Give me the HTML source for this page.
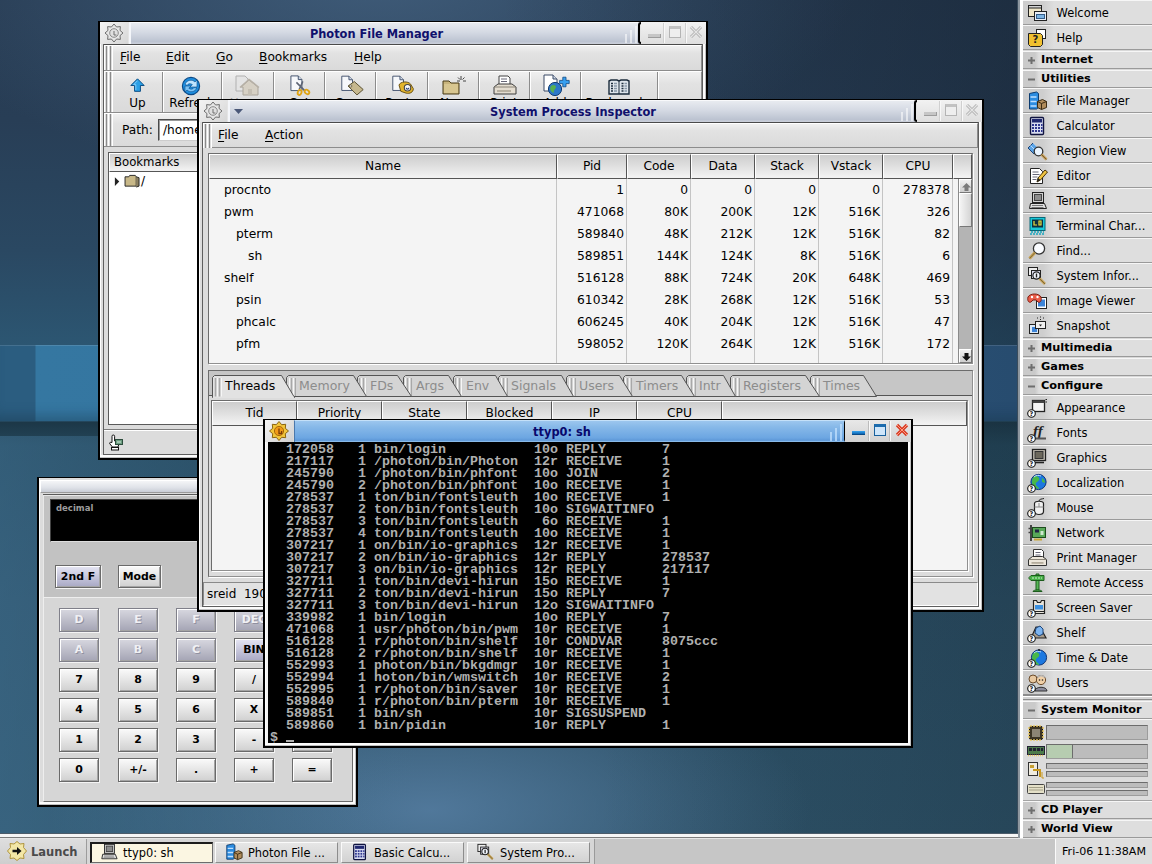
<!DOCTYPE html>
<html lang="en">
<head>
<meta charset="utf-8">
<title>Photon microGUI desktop</title>
<style>
*{box-sizing:border-box;margin:0;padding:0}
html,body{width:1152px;height:864px;overflow:hidden;background:#2a4257}
body{font-family:"DejaVu Sans","Liberation Sans",sans-serif;font-size:12.2px;color:#000;position:relative}
.abs,.win,.win *{position:absolute}
.win u,.win b.k{position:static}
u{text-decoration:underline;text-underline-offset:2px;text-decoration-thickness:1px}
/* ---------- desktop background ---------- */
#desk{position:absolute;left:0;top:0;width:1152px;height:864px;overflow:hidden;
 background:
  radial-gradient(ellipse 480px 220px at 380px -30px,rgba(72,104,136,.75),rgba(72,104,136,0) 100%),
  radial-gradient(ellipse 380px 150px at 430px 810px,rgba(84,124,160,.9),rgba(84,124,160,0) 100%),
  linear-gradient(180deg,#273b52 0,#283e56 120px,#2a4862 250px,#2c5672 345px,#2c5672 421px,#1c3747 422px,#24465a 445px,#2b4d63 600px,#2e5268 838px);}
#dk1{position:absolute;left:0;top:0;width:1152px;height:345px;background:linear-gradient(90deg,rgba(18,30,44,0) 0,rgba(18,30,44,0) 500px,rgba(18,30,44,.45) 1018px)}
#dk2{position:absolute;left:0;top:421px;width:1152px;height:417px;background:linear-gradient(90deg,rgba(20,40,52,0) 0,rgba(20,40,52,0) 600px,rgba(20,40,52,.28) 1018px)}
#band{position:absolute;left:0;top:345px;width:1152px;height:76px;background:linear-gradient(90deg,#2b5d80 0,#2b5d80 35px,#3577a1 36px,#3474a0 400px,#294f73 900px,#25486a 1152px);box-shadow:inset 0 1px 0 rgba(255,255,255,.12),inset 0 -14px 12px -8px rgba(20,50,70,.35)}
#band2{display:none}
#lt{position:absolute;left:0;top:436px;width:420px;height:402px;background:linear-gradient(90deg,rgba(66,116,150,.5),rgba(66,116,150,0))}
/* ---------- generic window ---------- */
.win{background:#dcdcdc;border:2px solid #000;border-top-width:1px;box-shadow:inset -1px -1px 0 #c0c0c0,inset -3px -3px 0 #fcfcfc,inset 1px 0 0 #fcfcfc}
.inner{left:3px;top:22px;right:3px;bottom:3px;border:1px solid #5e5e5e;border-top:0}
.tb{left:0;top:0;right:0;height:22px;background:#e4e4e4}
.tb .ico{left:0;top:0;width:28px;height:22px;background:linear-gradient(135deg,#f4f4f4,#d6d6d6)}
.tb .grad{left:29px;top:0;height:22px;border-left:2px solid #f4f6fa;border-top:1px solid #f8f9fb;
  background:linear-gradient(180deg,#e8ebf0 0,#d4d9e3 45%,#bcc3d1 88%,#ccd1db 100%)}
.tb .ttl{left:0;right:0;top:5px;text-align:center;font-weight:bold;font-size:11.4px;color:#10106c;white-space:nowrap}
.tb .cap{top:0;width:3px;height:22px;border:2px solid #000;border-right:0;border-radius:3px 0 0 3px}
.tb .btns{top:0;right:0;width:65px;height:22px;background:linear-gradient(180deg,#f2f2f2,#dedede)}
.tb .sep{top:1px;width:1px;height:20px;background:#d0d0d0;box-shadow:1px 0 0 #f8f8f8}
.bars{left:0;top:0;width:100%;height:21px}
.bars i{bottom:0;width:2px;background:rgba(255,255,255,.55)}
.hline{height:1px;background:#4a4a4a}
.grip{width:9px;background:repeating-linear-gradient(90deg,#fff 0,#fff 1px,#dcdcdc 1px,#dcdcdc 2px,#8a8a8a 2px,#8a8a8a 3px,#dcdcdc 3px,#dcdcdc 4px)}
.mbar{background:linear-gradient(180deg,#f0f0f0 0,#e2e2e2 30%,#dadada 100%);border-top:1px solid #fff;border-bottom:1px solid #8c8c8c;border-right:1px solid #8c8c8c}
.mbar span{top:4px;white-space:nowrap}
.hdr{background:linear-gradient(180deg,#cdcdcd 0,#e0e0e0 50%,#f2f2f2 95%);border:1px solid #555;border-top-color:#fff;border-left-color:#fff;text-align:center;white-space:nowrap}
.tsep{top:0;width:1px;height:40px;background:#8c8c8c;box-shadow:1px 0 0 #fff}
.mbar .tl{top:24px;font-size:12px;text-align:center;white-space:nowrap}
.mbar .tl.dis{color:#999}
.cb{width:40px;height:24px;border:1px solid #6a6a6a;box-shadow:inset 1px 1px 0 #fff,inset -1px -1px 0 #a4a4a4,1px 1px 0 #f4f4f4;background:linear-gradient(180deg,#fafafa,#d0d0d0);text-align:center;font-weight:bold;font-size:10.9px;line-height:22px;white-space:nowrap}
.cb.lav{background:linear-gradient(180deg,#e6e6f4,#a8a8c4)}
.cb.lav.dim{background:linear-gradient(180deg,#d8d8e0,#a4a4b4)}
.cb.dim{color:#f0f0f4;text-shadow:1px 1px 0 #9090a0;border-color:#80808a}
.cl{top:25px;width:1px;height:184px;background:#c4c4c4}
.pr{left:0;width:744px;height:22px}
.pr span{top:1px;white-space:nowrap;font-size:12.3px;line-height:16px}
.pr .r{text-align:right}
.sbb{width:13px;height:14px;background:linear-gradient(180deg,#f0f0f0,#cfcfcf);border:1px solid #fff;border-right-color:#777;border-bottom-color:#777}
#tty{left:3px;top:22px;width:640px;height:301px;background:#000;color:#b0b0b0;font-family:"Liberation Mono","DejaVu Sans Mono",monospace;font-weight:bold;font-size:13.33px;line-height:12px;padding:2px 0 0 2px;overflow:hidden;white-space:pre}
#tty .cur{position:static;display:inline-block;width:8px;height:2px;background:#b0b0b0;vertical-align:-1px}
/*SHELFCSS*/
#shelf{position:absolute;left:1020px;top:0;width:132px;height:838px;background:#d8d8d8;border-left:3px solid #fff;box-shadow:-2px 0 0 #8e979f,-3px 0 0 #3a4c5c}
#shelf>div{position:absolute}
.si{left:0;width:129px;height:25px;border-top:1px solid #f6f6f6;border-bottom:1px solid #9a9a9a;background:linear-gradient(90deg,#cdcdcd 0,#cecece 20px,#dedede 31px,#dedede 100%)}
.si svg{position:absolute;left:4px;top:2px}
.si span{position:absolute;left:33.5px;top:4.5px;font-size:11.45px;white-space:nowrap}
.sg{left:0;width:129px;height:18px;border-top:1px solid #f6f6f6;border-bottom:1px solid #9a9a9a;background:linear-gradient(90deg,#cacaca 0,#cacaca 12px,#dedede 16px,#dedede 100%)}
.sg .pm{position:absolute;left:5px;top:5px}
.sg span{position:absolute;left:18px;top:1px;font-weight:bold;font-size:11.3px;white-space:nowrap}
.bar{position:absolute;background:#bcbcbc;border:1px solid #6c6c6c;border-bottom-color:#9c9c9c;border-right-color:#9c9c9c}
/*SHELFCSSEND*/
/*TASKCSS*/
#deskedge{position:absolute;left:0;top:833px;width:1018px;height:5px;background:#f6f6f6;border-top:1px solid #4c5c6a;border-bottom:1px solid #7c7c7c}
#taskbar{position:absolute;left:0;top:838px;width:1152px;height:26px;background:#d6d6d6;border-top:1px solid #e6e6e6}
#taskbar>div{position:absolute}
.launch{left:0;top:0;width:87px;height:25px;background:linear-gradient(180deg,#dedede,#cecece);border-right:1px solid #9c9c9c}
.launch svg{position:absolute;left:6px;top:1px}
.launch span{position:absolute;left:31px;top:6px;font-weight:bold;font-size:11.5px;color:#4a4a4a}
.tk{top:3px;width:123px;height:21px;background:linear-gradient(180deg,#e6e6e6,#d2d2d2);border:1px solid #fafafa;border-right-color:#8c8c8c;border-bottom-color:#8c8c8c}
.tk svg{position:absolute;left:8px;top:0}
.tk span{position:absolute;left:32px;top:3px;font-size:11.4px;white-space:nowrap}
.tk.act{background:#fbf6e2;border:1px solid #1c1c1c;border-width:2px 1px 1px 2px;border-right-color:#6c6c6c;border-bottom-color:#6c6c6c}
.tk.act svg{left:7px;top:-1px}.tk.act span{left:31px;top:2px}
.rest{left:594px;top:0;width:461px;height:25px;background:#c6c6c6;border-left:1px solid #9a9a9a}
.clock{left:1055px;top:0;width:97px;height:25px;background:#dedede;border-left:1px solid #fafafa;font-size:11.1px;padding:6px 0 0 6px;white-space:nowrap}
/*TASKCSSEND*/
</style>
</head>
<body>
<div id="desk">
<div id="lt"></div><div id="dk1"></div><div id="dk2"></div><div id="band"></div>
<!-- ================= Photon File Manager ================= -->
<div class="win" id="fm" style="left:98px;top:21px;width:610px;height:439px">
 <div class="tb">
  <div class="ico"><svg class="abs" style="left:4px;top:1px" width="20" height="20" viewBox="0 0 20 20"><polygon points="10,1 12.6,4 16.4,3.6 16,7.4 19,10 16,12.6 16.4,16.4 12.6,16 10,19 7.4,16 3.6,16.4 4,12.6 1,10 4,7.4 3.6,3.6 7.4,4" fill="#e6e6e6" stroke="#6e6e6e" stroke-width="1"/><circle cx="10" cy="10" r="4.3" fill="#e0e0e0" stroke="#8a8a8a"/><path d="M10 8v4h2.4" stroke="#6e6e6e" fill="none"/></svg></div>
  <div class="grad" style="width:511px"></div>
  <div class="ttl" style="left:0;width:553px">Photon File Manager</div>
  <div class="bars"><i style="left:525px;height:9px"></i><i style="left:530px;height:13px"></i><i style="left:535px;height:17px"></i></div>
  <div class="cap" style="left:538px"></div>
  <div class="btns">
   <i class="abs" style="left:7px;top:12px;width:13px;height:4px;background:#c6c6c6;border-bottom:1px solid #9c9c9c;border-right:1px solid #9c9c9c"></i>
   <i class="sep" style="left:22px"></i>
   <i class="abs" style="left:28px;top:4px;width:12px;height:12px;border:1px solid #b4b4b4;border-top:3px solid #c2c2c2;background:#eee"></i>
   <i class="sep" style="left:44px"></i>
   <svg class="abs" style="left:48px;top:3px" width="14" height="14" viewBox="0 0 14 14"><path d="M2 2l10 10M12 2L2 12" stroke="#b0b0b0" stroke-width="3"/><path d="M2 2l10 10M12 2L2 12" stroke="#e6e6e6" stroke-width="1.2"/></svg>
  </div>
 </div>
 <div class="inner"></div>
 <div class="hline" style="left:4px;top:22px;right:4px"></div>
 <!-- menubar -->
 <div class="mbar" style="left:4px;top:23px;right:4px;height:26px">
  <div class="grip" style="left:0;top:0;height:24px"></div>
  <span style="left:16px"><u>F</u>ile</span><span style="left:62px"><u>E</u>dit</span><span style="left:112px"><u>G</u>o</span><span style="left:155px"><u>B</u>ookmarks</span><span style="left:250px"><u>H</u>elp</span>
 </div>
 <!-- toolbar -->
 <div class="mbar" id="fmtool" style="left:4px;top:49px;right:4px;height:42px">
  <div class="grip" style="left:0;top:0;height:40px"></div>
  <b class="tsep" style="left:58px"></b><b class="tsep" style="left:117px"></b><b class="tsep" style="left:169px"></b><b class="tsep" style="left:220px"></b><b class="tsep" style="left:271px"></b><b class="tsep" style="left:323px"></b><b class="tsep" style="left:374px"></b><b class="tsep" style="left:425px"></b><b class="tsep" style="left:476px"></b><b class="tsep" style="left:553px"></b>
  <span class="tl" style="left:9px;width:49px">Up</span><span class="tl" style="left:59px;width:58px">Refresh</span><span class="tl dis" style="left:118px;width:51px">Home</span><span class="tl" style="left:170px;width:50px">Cut</span><span class="tl" style="left:221px;width:50px">Copy</span><span class="tl" style="left:272px;width:51px">Paste</span><span class="tl" style="left:324px;width:50px">New</span><span class="tl" style="left:375px;width:50px">Print</span><span class="tl" style="left:426px;width:50px">Add</span><span class="tl" style="left:477px;width:76px">Bookmarks</span>
  <!-- Up -->
  <svg class="abs" style="left:25px;top:6px" width="17" height="15" viewBox="0 0 20 18"><path d="M10 1L18 9H13.5V16H6.5V9H2Z" fill="#2aa0e6" stroke="#0d4f86" stroke-width="1.2" stroke-linejoin="round"/><path d="M10 3.2L5.4 8H8v6.5" stroke="#8fd4ff" fill="none"/></svg>
  <!-- Refresh -->
  <svg class="abs" style="left:75px;top:3px" width="24" height="22" viewBox="0 0 24 22"><circle cx="12" cy="11" r="8.6" fill="#1e8fe0" stroke="#0c4a86" stroke-width="1.2"/><path d="M6 9c2-4 7-5 10-2l2-2v7h-7l2.4-2.4c-2-1.600-4.400-1-5.400.8z" fill="#bfe4ff" stroke="#0c4a86" stroke-width=".6"/><path d="M18 13c-2 4-7 5-10 2l-2 2v-6h6l-2.200 2.200c2 1.600 4.200 1 5.200-.6z" fill="#7cc4f6" stroke="#0c4a86" stroke-width=".6"/></svg>
  <!-- Home (disabled) -->
  <svg class="abs" style="left:130px;top:3px" width="26" height="22" viewBox="0 0 26 22"><path d="M2 1h9l3 3v12H2z" fill="#e4e4e4" stroke="#b0b0b0"/><path d="M7 12l8-7 9 7v8H9v-8z" fill="#d6d0c4" stroke="#aaa49a"/><path d="M6 12.500l9-8 10 8" fill="none" stroke="#b6b0a6" stroke-width="1.600"/><rect x="14" y="14" width="4" height="6" fill="#c4beb2"/></svg>
  <!-- Cut -->
  <svg class="abs" style="left:185px;top:3px" width="24" height="22" viewBox="0 0 26 24"><path d="M2 1h8l4 4v12H2z" fill="#f6f8fb" stroke="#3a4a66"/><path d="M10 1v4h4" fill="#cfd8e6" stroke="#3a4a66"/><path d="M8 8l9 9M15 7l-4 9" stroke="#5c6474" stroke-width="1.700"/><ellipse cx="19.500" cy="18.500" rx="2.800" ry="2" transform="rotate(40 19.500 18.500)" fill="none" stroke="#e0a414" stroke-width="2"/><ellipse cx="11.500" cy="19" rx="2" ry="2.800" transform="rotate(20 11.500 19)" fill="none" stroke="#e0a414" stroke-width="2"/></svg>
  <!-- Copy -->
  <svg class="abs" style="left:236px;top:3px" width="25" height="22" viewBox="0 0 28 24"><path d="M2 1h8l4 4v12H2z" fill="#f6f8fb" stroke="#3a4a66"/><path d="M10 1v4h4" fill="#cfd8e6" stroke="#3a4a66"/><path d="M9 12l7-5 10 9-7 6z" fill="#c6b88e" stroke="#4e4424"/><circle cx="12" cy="12" r="1.300" fill="#fff" stroke="#4e4424" stroke-width=".8"/></svg>
  <!-- Paste -->
  <svg class="abs" style="left:287px;top:3px" width="25" height="22" viewBox="0 0 28 24"><path d="M2 1h8l4 4v12H2z" fill="#f6f8fb" stroke="#3a4a66"/><path d="M10 1v4h4" fill="#cfd8e6" stroke="#3a4a66"/><path d="M9 11c1-4 10-5 13-1l3 5c0 4-4 6-8 5l-6-2z" fill="#e2b42c" stroke="#5e4608"/><circle cx="18.500" cy="14" r="3.600" fill="#fafafa" stroke="#444" stroke-width="1.200"/><path d="M17 14a1.500 1.500 0 1 0 3 0" stroke="#28407a" fill="none" stroke-width="1.200"/></svg>
  <!-- New folder -->
  <svg class="abs" style="left:337px;top:3px" width="26" height="22" viewBox="0 0 26 22"><path d="M2 6h6l2 2h8v11H2z" fill="#c8b47c" stroke="#4a3c18"/><path d="M3 9h14v9H3z" fill="#d8c690"/><path d="M20 1v4M17 2.500l2 2M23.500 2.500l-2 2M16 6h3M22 6h3" stroke="#444" stroke-width="1"/></svg>
  <!-- Print -->
  <svg class="abs" style="left:388px;top:3px" width="26" height="22" viewBox="0 0 26 22"><path d="M7 1h9l2 2v8H7z" fill="#fff" stroke="#444"/><path d="M9 4h6M9 6.500h6" stroke="#667" stroke-width="1"/><path d="M2 12l4-3h14l4 3v7H2z" fill="#e4ddd0" stroke="#3c3c3c"/><path d="M2 12h22" stroke="#8a8478"/><rect x="5" y="15" width="14" height="2" fill="#b8b0a0"/></svg>
  <!-- Add bookmark -->
  <svg class="abs" style="left:438px;top:2px" width="28" height="24" viewBox="0 0 28 24"><path d="M2 1h9l4 4v12H2z" fill="#fff" stroke="#3a4a66"/><path d="M11 1v4h4" fill="#cfd8e6" stroke="#3a4a66"/><circle cx="13" cy="15" r="6.600" fill="#2c78c8" stroke="#103a70"/><path d="M9 12c2-2 5-1 5 1s-3 3-2 6c-3-1-5-4-3-7z" fill="#58b050"/><path d="M20 3h4v4h4v4h-4v4h-4v-4h-4V7h4z" transform="scale(.8) translate(6,1)" fill="#38a0f0" stroke="#0c4a86"/></svg>
  <!-- Bookmarks book -->
  <svg class="abs" style="left:504px;top:6px" width="22" height="18" viewBox="0 0 22 18"><path d="M1 3l2-1h6l2 1 2-1h6l2 1v13H1z" fill="#dfe6ec" stroke="#1c2c3c" stroke-width="1.400"/><path d="M11 3v13" stroke="#1c2c3c"/><path d="M3 5.500h2M3 8h2M3 10.500h2M3 13h2M13.500 5.500h2M13.500 8h2M13.500 10.500h2M13.500 13h2" stroke="#203040" stroke-width="1.300"/><path d="M6 5.500h3M6 8h3M6 10.500h3M6 13h3M16.500 5.500h2.500M16.500 8h2.500M16.500 10.500h2.500M16.500 13h2.500" stroke="#8898a8" stroke-width="1.300"/></svg>
 </div>
 <!-- path row -->
 <div class="mbar" style="left:4px;top:91px;right:4px;height:34px">
  <div class="grip" style="left:0;top:0;height:32px"></div>
  <span style="left:18px;top:9px">Path:</span>
  <div style="left:54px;top:5px;width:520px;height:22px;background:#fff;border:1px solid #4a4a4a;border-right-color:#ccc;border-bottom-color:#ccc;box-shadow:inset 1px 1px 0 #9a9a9a"><span style="left:4px;top:3px">/home</span></div>
 </div>
 <!-- bookmarks pane -->
 <div style="left:8px;top:130px;width:221px;height:273px;background:#fff;border:1px solid #5a5a5a">
  <div class="hdr" style="left:0;top:0;width:219px;height:19px;text-align:left;padding:1px 0 0 4px;font-size:11.7px">Bookmarks</div>
  <svg style="left:5px;top:24px" width="7" height="9" viewBox="0 0 8 10"><path d="M1 0l5 5-5 5z" fill="#222"/></svg>
  <svg style="left:15px;top:21px" width="17" height="14" viewBox="0 0 18 15"><path d="M1 3h4l1-1.500h6l1 1.500v10H1z" fill="#c8b888" stroke="#222"/><path d="M13 3l3 1v9l-3 1" fill="#8c8060" stroke="#222"/></svg>
  <span style="left:32px;top:21px">/</span>
 </div>
 <!-- status -->
 <div style="left:4px;top:407px;right:4px;height:1px;background:#7c7c7c"></div>
 <div style="left:4px;top:408px;right:4px;height:1px;background:#fff"></div>
 <svg style="left:7px;top:411px" width="18" height="18" viewBox="0 0 18 18"><path d="M5 9.500V3.300a1.300 1.300 0 0 1 2.600 0V8l3.200.600q1.400.400 1.200 2L11 14H5.500L2.800 10.800q-.6-1.300.9-1.500z" fill="#fff" stroke="#111" stroke-width="1"/><rect x="4.500" y="14.500" width="7" height="2.500" fill="#fff" stroke="#111" stroke-width="1"/><rect x="8.500" y="6.500" width="7" height="5" fill="#6a9c7e" stroke="#2c4c3c"/><path d="M10 9h4" stroke="#d4e8dc"/></svg>
</div>
<!-- ================= Basic Calculator ================= -->
<div class="win" id="calc" style="left:37px;top:477px;width:321px;height:330px"><div style="left:0;top:1px;right:0;bottom:0">
 <div style="left:1px;top:1px;right:1px;height:13px;border:1px solid #fff;border-bottom-color:#9a9a9a;background:linear-gradient(180deg,#f4f5f7,#dfe2e8 60%,#c9cdd6)"></div>
 <div style="left:4px;top:15px;right:4px;height:1px;background:#5a5a5a"></div>
 <div style="left:4px;top:16px;right:3px;height:102px;background:#c2c2c2;border-top:1px solid #e8e8e8;border-left:1px solid #e8e8e8"></div>
 <div style="left:4px;top:118px;right:3px;height:205px;background:#d6d6d6;border-top:1px solid #eee;border-left:1px solid #eee;border-bottom:1px solid #6a6a6a;border-right:1px solid #6a6a6a"></div>
 <div style="left:11px;top:20px;width:295px;height:43px;background:#000;border:1px solid #444;border-bottom-color:#ddd;border-right-color:#ddd"><span style="left:5px;top:3px;font-size:8.5px;font-weight:bold;color:#9c9c9c">decimal</span></div>
 <div class="cb lav" style="left:16px;top:86px;width:46px;height:23px">2nd F</div>
 <div class="cb" style="left:79px;top:86px;width:43px;height:23px">Mode</div>
 <!-- row D E F DEC -->
 <div class="cb lav dim" style="left:20px;top:129px">D</div><div class="cb lav dim" style="left:79px;top:129px">E</div><div class="cb lav dim" style="left:137px;top:129px">F</div><div class="cb lav dim" style="left:195px;top:129px">DEC</div><div class="cb lav dim" style="left:253px;top:129px">OCT</div>
 <div class="cb lav dim" style="left:20px;top:159px">A</div><div class="cb lav dim" style="left:79px;top:159px">B</div><div class="cb lav dim" style="left:137px;top:159px">C</div><div class="cb lav" style="left:195px;top:159px">BIN</div><div class="cb lav" style="left:253px;top:159px">HEX</div>
 <div class="cb" style="left:20px;top:189px">7</div><div class="cb" style="left:79px;top:189px">8</div><div class="cb" style="left:137px;top:189px">9</div><div class="cb" style="left:195px;top:189px">/</div><div class="cb" style="left:253px;top:189px">%</div>
 <div class="cb" style="left:20px;top:219px">4</div><div class="cb" style="left:79px;top:219px">5</div><div class="cb" style="left:137px;top:219px">6</div><div class="cb" style="left:195px;top:219px">X</div><div class="cb" style="left:253px;top:219px">C</div>
 <div class="cb" style="left:20px;top:249px">1</div><div class="cb" style="left:79px;top:249px">2</div><div class="cb" style="left:137px;top:249px">3</div><div class="cb" style="left:195px;top:249px">-</div><div class="cb" style="left:253px;top:249px">CE</div>
 <div class="cb" style="left:20px;top:279px">0</div><div class="cb" style="left:79px;top:279px">+/-</div><div class="cb" style="left:137px;top:279px">.</div><div class="cb" style="left:195px;top:279px">+</div><div class="cb" style="left:253px;top:279px">=</div>
</div></div>
<!-- ================= System Process Inspector ================= -->
<div class="win" id="spi" style="left:197px;top:99px;width:787px;height:513px">
 <div class="tb">
  <div class="ico"><svg class="abs" style="left:4px;top:1px" width="20" height="20" viewBox="0 0 20 20"><polygon points="10,1 12.6,4 16.4,3.6 16,7.4 19,10 16,12.6 16.4,16.4 12.6,16 10,19 7.4,16 3.6,16.4 4,12.6 1,10 4,7.4 3.600,3.600 7.400,4" fill="#e6e6e6" stroke="#6e6e6e" stroke-width="1"/><circle cx="10" cy="10" r="4.300" fill="#e0e0e0" stroke="#8a8a8a"/><path d="M10 8v4h2.400" stroke="#6e6e6e" fill="none"/></svg></div>
  <div class="grad" style="width:688px"></div>
  <svg class="abs" style="left:35px;top:9px" width="9" height="5" viewBox="0 0 11 6"><path d="M0 0h11L5.500 6z" fill="#4a5878"/></svg>
  <div class="ttl" style="left:0;width:748px">System Process Inspector</div>
  <div class="bars"><i style="left:702px;height:9px"></i><i style="left:707px;height:13px"></i><i style="left:712px;height:17px"></i></div>
  <div class="cap" style="left:715px"></div>
  <div class="btns">
   <i class="abs" style="left:7px;top:12px;width:13px;height:4px;background:#c6c6c6;border-bottom:1px solid #9c9c9c;border-right:1px solid #9c9c9c"></i>
   <i class="sep" style="left:22px"></i>
   <i class="abs" style="left:28px;top:4px;width:12px;height:12px;border:1px solid #b4b4b4;border-top:3px solid #c2c2c2;background:#eee"></i>
   <i class="sep" style="left:44px"></i>
   <svg class="abs" style="left:48px;top:3px" width="14" height="14" viewBox="0 0 14 14"><path d="M2 2l10 10M12 2L2 12" stroke="#b0b0b0" stroke-width="3"/><path d="M2 2l10 10M12 2L2 12" stroke="#e6e6e6" stroke-width="1.200"/></svg>
  </div>
 </div>
 <div class="inner"></div>
 <div class="hline" style="left:4px;top:22px;right:4px"></div>
 <div class="mbar" style="left:4px;top:23px;right:4px;height:25px">
  <div class="grip" style="left:0;top:0;height:24px"></div>
  <span style="left:15px"><u>F</u>ile</span><span style="left:62px"><u>A</u>ction</span>
 </div>
 <!-- process list -->
 <div id="plist" style="left:9px;top:53px;width:765px;height:211px;background:#f4f4f4;border:1px solid #6c6c6c;border-right-color:#909090;border-bottom-color:#909090;box-shadow:1px 1px 0 #fff">
  <div class="hdr" style="left:0;top:0;width:348px;height:25px;line-height:22px">Name</div>
  <div class="hdr" style="left:348px;top:0;width:70px;height:25px;line-height:22px">Pid</div>
  <div class="hdr" style="left:418px;top:0;width:64px;height:25px;line-height:22px">Code</div>
  <div class="hdr" style="left:482px;top:0;width:64px;height:25px;line-height:22px">Data</div>
  <div class="hdr" style="left:546px;top:0;width:64px;height:25px;line-height:22px">Stack</div>
  <div class="hdr" style="left:610px;top:0;width:64px;height:25px;line-height:22px">Vstack</div>
  <div class="hdr" style="left:674px;top:0;width:70px;height:25px;line-height:22px">CPU</div>
  <div class="hdr" style="left:744px;top:0;width:19px;height:25px"></div>
  <i class="cl" style="left:347px"></i><i class="cl" style="left:417px"></i><i class="cl" style="left:481px"></i><i class="cl" style="left:545px"></i><i class="cl" style="left:609px"></i><i class="cl" style="left:673px"></i><i class="cl" style="left:743px"></i>
  <div class="pr" style="top:27px"><span style="left:15px">procnto</span><span class="r" style="left:348px;width:67px">1</span><span class="r" style="left:418px;width:61px">0</span><span class="r" style="left:482px;width:61px">0</span><span class="r" style="left:546px;width:61px">0</span><span class="r" style="left:610px;width:61px">0</span><span class="r" style="left:674px;width:67px">278378</span></div>
  <div class="pr" style="top:49px"><span style="left:15px">pwm</span><span class="r" style="left:348px;width:67px">471068</span><span class="r" style="left:418px;width:61px">80K</span><span class="r" style="left:482px;width:61px">200K</span><span class="r" style="left:546px;width:61px">12K</span><span class="r" style="left:610px;width:61px">516K</span><span class="r" style="left:674px;width:67px">326</span></div>
  <div class="pr" style="top:71px"><span style="left:27px">pterm</span><span class="r" style="left:348px;width:67px">589840</span><span class="r" style="left:418px;width:61px">48K</span><span class="r" style="left:482px;width:61px">212K</span><span class="r" style="left:546px;width:61px">12K</span><span class="r" style="left:610px;width:61px">516K</span><span class="r" style="left:674px;width:67px">82</span></div>
  <div class="pr" style="top:93px"><span style="left:39px">sh</span><span class="r" style="left:348px;width:67px">589851</span><span class="r" style="left:418px;width:61px">144K</span><span class="r" style="left:482px;width:61px">124K</span><span class="r" style="left:546px;width:61px">8K</span><span class="r" style="left:610px;width:61px">516K</span><span class="r" style="left:674px;width:67px">6</span></div>
  <div class="pr" style="top:115px"><span style="left:15px">shelf</span><span class="r" style="left:348px;width:67px">516128</span><span class="r" style="left:418px;width:61px">88K</span><span class="r" style="left:482px;width:61px">724K</span><span class="r" style="left:546px;width:61px">20K</span><span class="r" style="left:610px;width:61px">648K</span><span class="r" style="left:674px;width:67px">469</span></div>
  <div class="pr" style="top:137px"><span style="left:27px">psin</span><span class="r" style="left:348px;width:67px">610342</span><span class="r" style="left:418px;width:61px">28K</span><span class="r" style="left:482px;width:61px">268K</span><span class="r" style="left:546px;width:61px">12K</span><span class="r" style="left:610px;width:61px">516K</span><span class="r" style="left:674px;width:67px">53</span></div>
  <div class="pr" style="top:159px"><span style="left:27px">phcalc</span><span class="r" style="left:348px;width:67px">606245</span><span class="r" style="left:418px;width:61px">40K</span><span class="r" style="left:482px;width:61px">204K</span><span class="r" style="left:546px;width:61px">12K</span><span class="r" style="left:610px;width:61px">516K</span><span class="r" style="left:674px;width:67px">47</span></div>
  <div class="pr" style="top:181px"><span style="left:27px">pfm</span><span class="r" style="left:348px;width:67px">598052</span><span class="r" style="left:418px;width:61px">120K</span><span class="r" style="left:482px;width:61px">264K</span><span class="r" style="left:546px;width:61px">12K</span><span class="r" style="left:610px;width:61px">516K</span><span class="r" style="left:674px;width:67px">172</span></div>
  <!-- scrollbar -->
  <div style="left:749px;top:25px;width:14px;height:184px;background:#b4b4b4;border-left:1px solid #8a8a8a">
   <div class="sbb" style="left:0;top:0"><svg class="abs" style="left:2px;top:3px" width="9" height="8" viewBox="0 0 9 8"><path d="M4.500 0L9 4.500H6.500V8h-4V4.500H0z" fill="#7a7a7a"/></svg></div>
   <div style="left:0;top:14px;width:13px;height:34px;background:linear-gradient(90deg,#f4f4f4,#d4d4d4);border:1px solid #fff;border-right-color:#777;border-bottom-color:#777"></div>
   <div class="sbb" style="left:0;top:170px"><svg class="abs" style="left:2px;top:3px" width="9" height="8" viewBox="0 0 9 8"><path d="M4.500 8L9 3.500H6.500V0h-4v3.500H0z" fill="#111"/></svg></div>
  </div>
 </div>
 <!-- tab panel -->
 <div id="tabs" style="left:9px;top:270px;width:765px;height:207px;border:1px solid #6c6c6c;border-right-color:#909090;border-bottom-color:#909090;box-shadow:1px 1px 0 #fff;background:#dcdcdc">
  <div style="left:0;top:0;width:763px;height:25px;background:#c6c6c6;border-bottom:1px solid #555"></div>
  <svg style="left:0;top:3px" width="764" height="24" viewBox="0 0 764 24">
   <defs><pattern id="gp" width="4" height="4" patternUnits="userSpaceOnUse"><rect width="4" height="4" fill="#d2d2d2"/><rect width="1" height="4" fill="#f6f6f6"/><rect x="2" width="1" height="4" fill="#a8a8a8"/></pattern></defs>
    <path d="M601.5 22.500V3.500l2-2H654.5L667.5 22.500z" fill="#d4d4d4" stroke="#555"/><rect x="603" y="4" width="8" height="18" fill="url(#gp)"/>
    <path d="M521.5 22.500V3.500l2-2H596.5L610.5 22.500z" fill="#d4d4d4" stroke="#555"/><rect x="523" y="4" width="8" height="18" fill="url(#gp)"/>
    <path d="M477.5 22.500V3.500l2-2H514.5L526.5 22.500z" fill="#d4d4d4" stroke="#555"/><rect x="479" y="4" width="8" height="18" fill="url(#gp)"/>
    <path d="M414.5 22.500V3.500l2-2H472.5L485.5 22.500z" fill="#d4d4d4" stroke="#555"/><rect x="416" y="4" width="8" height="18" fill="url(#gp)"/>
    <path d="M357.5 22.500V3.500l2-2H410.5L423.5 22.500z" fill="#d4d4d4" stroke="#555"/><rect x="359" y="4" width="8" height="18" fill="url(#gp)"/>
    <path d="M289.5 22.500V3.500l2-2H352.5L364.5 22.500z" fill="#d4d4d4" stroke="#555"/><rect x="291" y="4" width="8" height="18" fill="url(#gp)"/>
    <path d="M244.5 22.500V3.500l2-2H286.5L298.5 22.500z" fill="#d4d4d4" stroke="#555"/><rect x="246" y="4" width="8" height="18" fill="url(#gp)"/>
    <path d="M194.5 22.500V3.500l2-2H239.5L252.5 22.500z" fill="#d4d4d4" stroke="#555"/><rect x="196" y="4" width="8" height="18" fill="url(#gp)"/>
    <path d="M148.5 22.500V3.500l2-2H188.5L202.5 22.500z" fill="#d4d4d4" stroke="#555"/><rect x="150" y="4" width="8" height="18" fill="url(#gp)"/>
    <path d="M77.5 22.500V3.500l2-2H144.5L157.5 22.500z" fill="#d4d4d4" stroke="#555"/><rect x="79" y="4" width="8" height="18" fill="url(#gp)"/>
    <path d="M3.5 23.500V3.500l2-2H72.5L85.5 23.500z" fill="#e2e2e2" stroke="#555"/><rect x="5" y="4" width="8" height="19" fill="url(#gp)"/>
   <path d="M4 23.500h81" stroke="#e2e2e2" stroke-width="2"/>
   <g font-family="DejaVu Sans" font-size="12.500" fill="#8c8c8c">
    <text x="16" y="16" fill="#000">Threads</text><text x="90" y="16">Memory</text><text x="161" y="16">FDs</text><text x="207" y="16">Args</text><text x="257" y="16">Env</text><text x="302" y="16">Signals</text><text x="370" y="16">Users</text><text x="427" y="16">Timers</text><text x="490" y="16">Intr</text><text x="534" y="16">Registers</text><text x="614" y="16">Times</text>
   </g>
  </svg>
  <!-- thread list -->
  <div style="left:2px;top:29px;width:757px;height:171px;background:#f4f4f4;border:1px solid #6c6c6c;border-right-color:#909090;border-bottom-color:#909090;box-shadow:1px 1px 0 #fff">
   <div class="hdr" style="left:0;top:0;width:85px;height:25px;line-height:22px">Tid</div><div class="hdr" style="left:85px;top:0;width:85px;height:25px;line-height:22px">Priority</div><div class="hdr" style="left:170px;top:0;width:85px;height:25px;line-height:22px">State</div><div class="hdr" style="left:255px;top:0;width:85px;height:25px;line-height:22px">Blocked</div><div class="hdr" style="left:340px;top:0;width:85px;height:25px;line-height:22px">IP</div><div class="hdr" style="left:425px;top:0;width:85px;height:25px;line-height:22px">CPU</div><div class="hdr" style="left:510px;top:0;width:245px;height:25px"></div>
  </div>
 </div>
 <!-- status bar -->
 <div style="left:4px;top:482px;right:4px;height:24px;border:1px solid #8a8a8a;border-right-color:#fff;border-bottom-color:#fff;background:#e2e2e2"><span style="left:3px;top:4px;white-space:pre;font-size:12px">sreid  190</span></div>
</div>
<!-- ================= ttyp0: sh (pterm) ================= -->
<div class="win" id="term" style="left:263px;top:419px;width:650px;height:329px;background:#f2f2f2">
 <div class="tb" style="background:#dadada">
  <div class="ico" style="background:linear-gradient(135deg,#f6f6f6,#cfcfcf)"><svg class="abs" style="left:4px;top:1px" width="20" height="20" viewBox="0 0 20 20"><polygon points="10,.5 12.700,3.700 16.700,3.300 16.300,7.300 19.500,10 16.300,12.700 16.700,16.700 12.700,16.300 10,19.500 7.300,16.300 3.300,16.700 3.700,12.700 .5,10 3.700,7.300 3.300,3.300 7.300,3.700" fill="#f2c63c" stroke="#8a6410" stroke-width="1"/><circle cx="10" cy="10" r="4.600" fill="#f09a18" stroke="#a86a08"/><path d="M10 7.500v5h2.600v-2.500" stroke="#7a3c08" fill="none" stroke-width="1.300"/></svg></div>
  <div class="grad" style="width:551px;border-left:1px solid #4a78ac;border-top:1px solid #c4e0f8;background:linear-gradient(180deg,#9cc6ee 0,#86b8e8 30%,#6ca6e2 80%,#5e98d8 92%,#9cc8f0 100%)"></div>
  <div class="ttl" style="left:0;width:594px;color:#08086c">ttyp0: sh</div>
  <div class="bars"><i style="left:565px;height:9px;background:rgba(200,228,255,.7)"></i><i style="left:570px;height:13px;background:rgba(200,228,255,.7)"></i><i style="left:575px;height:17px;background:rgba(200,228,255,.7)"></i></div>
  <div class="cap" style="left:579px"></div>
  <div class="btns" style="width:66px;background:linear-gradient(180deg,#e8e8e8,#d2d2d2)">
   <i class="abs" style="left:7px;top:11px;width:13px;height:4px;background:linear-gradient(180deg,#38a4f0,#0c64b0);border-bottom:1px solid #0a4a86"></i>
   <i class="sep" style="left:23px;background:#bcbcbc"></i>
   <i class="abs" style="left:29px;top:4px;width:12px;height:12px;border:1.500px solid #18609c;border-top:3px solid #1c6cae;background:#cfe6fa"></i>
   <i class="sep" style="left:44px;background:#bcbcbc"></i>
   <svg class="abs" style="left:50px;top:3px" width="14" height="14" viewBox="0 0 14 14"><path d="M2 2l10 10M12 2L2 12" stroke="#d83c24" stroke-width="3.200"/><path d="M2 2l10 10M12 2L2 12" stroke="#ff9a80" stroke-width="1"/></svg>
  </div>
 </div>
 <pre id="tty">  172058   1 bin/login           10o REPLY       7
  217117   1 /photon/bin/Photon  12r RECEIVE     1
  245790   1 /photon/bin/phfont  10o JOIN        2
  245790   2 /photon/bin/phfont  10o RECEIVE     1
  278537   1 ton/bin/fontsleuth  10o RECEIVE     1
  278537   2 ton/bin/fontsleuth  10o SIGWAITINFO
  278537   3 ton/bin/fontsleuth   6o RECEIVE     1
  278537   4 ton/bin/fontsleuth  10o RECEIVE     1
  307217   1 on/bin/io-graphics  12r RECEIVE     1
  307217   2 on/bin/io-graphics  12r REPLY       278537
  307217   3 on/bin/io-graphics  12r REPLY       217117
  327711   1 ton/bin/devi-hirun  15o RECEIVE     1
  327711   2 ton/bin/devi-hirun  15o REPLY       7
  327711   3 ton/bin/devi-hirun  12o SIGWAITINFO
  339982   1 bin/login           10o REPLY       7
  471068   1 usr/photon/bin/pwm  10r RECEIVE     1
  516128   1 r/photon/bin/shelf  10r CONDVAR     8075ccc
  516128   2 r/photon/bin/shelf  10r RECEIVE     1
  552993   1 photon/bin/bkgdmgr  10r RECEIVE     1
  552994   1 hoton/bin/wmswitch  10r RECEIVE     2
  552995   1 r/photon/bin/saver  10r RECEIVE     1
  589840   1 r/photon/bin/pterm  10r RECEIVE     1
  589851   1 bin/sh              10r SIGSUSPEND
  589860   1 bin/pidin           10r REPLY       1
$ <span class="cur"></span></pre>
</div>
<!--SHELF_START-->
<!-- ================= Shelf ================= -->
<div id="shelf">
<div class="si" style="top:0px"><svg width="21" height="20" viewBox="0 0 21 20"><rect x="1.500" y="2.500" width="13" height="11" fill="#efe6c8" stroke="#222"/><rect x="1.500" y="2.500" width="13" height="2.500" fill="#d4d4d4" stroke="#222"/><rect x="7.500" y="8.500" width="12" height="9" fill="#e8eef6" stroke="#222"/><rect x="9.500" y="11.500" width="8" height="4" fill="#7cb4e4" stroke="#345c88"/></svg><span>Welcome</span></div>
<div class="si" style="top:25px"><svg width="21" height="20" viewBox="0 0 21 20"><rect x="9.500" y="1.500" width="9" height="9" fill="#fff" stroke="#222"/><path d="M1.500 5.500h12l2 2v9l-2 2h-10l-2-2z" fill="#f0c030" stroke="#222"/><text x="8.500" y="15" font-size="10" font-weight="bold" text-anchor="middle" font-family="DejaVu Sans" fill="#222">?</text></svg><span>Help</span></div>
<div class="sg" style="top:51px"><svg class="pm" width="7" height="7" viewBox="0 0 7 7"><path d="M0 3.500h7M3.500 0v7" stroke="#6e6e6e" stroke-width="2"/></svg><span>Internet</span></div>
<div class="sg" style="top:70px"><svg class="pm" width="7" height="7" viewBox="0 0 7 7"><path d="M0 3.500h7" stroke="#6e6e6e" stroke-width="2"/></svg><span>Utilities</span></div>
<div class="si" style="top:88px"><svg width="21" height="20" viewBox="0 0 21 20"><path d="M2.500 2.500l7-1.500 2 1.500v14l-2 1.500h-7z" fill="#2c8ce0" stroke="#0c3c70"/><path d="M3.500 6h6M3.500 10.500h6M3.500 15h6" stroke="#bfe0ff" stroke-width="1.600"/><path d="M10.500 10.500l5-2 4 2v6l-5 2-4-2z" fill="#b08c5c" stroke="#3c2c14"/><path d="M10.500 10.500l4 2 5-2M14.500 12.500v6" stroke="#3c2c14" fill="none"/></svg><span>File Manager</span></div>
<div class="si" style="top:113px"><svg width="21" height="20" viewBox="0 0 21 20"><rect x="3.500" y="1.500" width="13" height="17" rx="1" fill="#d8dcf0" stroke="#101440" stroke-width="1.400"/><rect x="5" y="3" width="10" height="3.500" fill="#202870"/><g fill="#303890"><rect x="5" y="8" width="2" height="2"/><rect x="8" y="8" width="2" height="2"/><rect x="11" y="8" width="2" height="2"/><rect x="14" y="8" width="1.500" height="2"/><rect x="5" y="11" width="2" height="2"/><rect x="8" y="11" width="2" height="2"/><rect x="11" y="11" width="2" height="2"/><rect x="14" y="11" width="1.500" height="2"/><rect x="5" y="14" width="2" height="2"/><rect x="8" y="14" width="2" height="2"/><rect x="11" y="14" width="2" height="2"/><rect x="14" y="14" width="1.500" height="2"/></g></svg><span>Calculator</span></div>
<div class="si" style="top:138px"><svg width="21" height="20" viewBox="0 0 21 20"><path d="M1 7l5-5 6 6-5 5z" fill="#5aa4e8" stroke="#1c4478"/><path d="M3.500 4.500l6 6M6 2l6 6" stroke="#d0e8ff" stroke-width=".8"/><circle cx="11.500" cy="10.500" r="4.300" fill="#eaf4ff" stroke="#333" stroke-width="1.300"/><path d="M14.500 13.500l5 5" stroke="#c89c50" stroke-width="2.600"/><path d="M14.500 13.500l5 5" stroke="#333" stroke-width=".6"/></svg><span>Region View</span></div>
<div class="si" style="top:163px"><svg width="21" height="20" viewBox="0 0 21 20"><path d="M3.500 2.500h9l3 3v12h-12z" fill="#fff" stroke="#222"/><path d="M5.500 6h6M5.500 8.500h7M5.500 11h5M5.500 13.500h4" stroke="#667" stroke-width="1"/><path d="M10 16l1-4 7-8 2.500 2-7 8z" fill="#f0c440" stroke="#4a3408"/><path d="M10 16l1-4 2.500 2z" fill="#222"/></svg><span>Editor</span></div>
<div class="si" style="top:188px"><svg width="21" height="20" viewBox="0 0 21 20"><rect x="5.500" y="1.500" width="11" height="10" fill="#d0d0d0" stroke="#222"/><rect x="7.500" y="3.500" width="7" height="6" fill="#8c8c8c" stroke="#444"/><path d="M3.500 12.500h14l2 5h-17z" fill="#e0e0e0" stroke="#222"/><path d="M5 14.500h11M4.500 16.500h12" stroke="#777"/></svg><span>Terminal</span></div>
<div class="si" style="top:213px"><svg width="21" height="20" viewBox="0 0 21 20"><rect x="3" y="1.500" width="15" height="13" fill="#18c8d8" stroke="#086878"/><rect x="5" y="3.500" width="11" height="8" fill="#0c3040"/><path d="M7 5v4h3M12 5h2v4h-2z" stroke="#f0e040" fill="none" stroke-width="1.200"/><path d="M4 16h13M3 18h15" stroke="#18a8c0" stroke-width="1.600" stroke-dasharray="2 1"/></svg><span>Terminal Char...</span></div>
<div class="si" style="top:238px"><svg width="21" height="20" viewBox="0 0 21 20"><circle cx="12" cy="7.500" r="5.600" fill="#fafcff" stroke="#333" stroke-width="1.300"/><path d="M8 11.500l-5.500 6" stroke="#c8a050" stroke-width="3"/><path d="M8 11.500l-5.500 6" stroke="#443" stroke-width=".6"/></svg><span>Find...</span></div>
<div class="si" style="top:263px"><svg width="21" height="20" viewBox="0 0 21 20"><rect x="1.500" y="1.500" width="9" height="8" fill="#eee" stroke="#222"/><rect x="4.500" y="4.500" width="9" height="8" fill="#dde" stroke="#222"/><circle cx="9.500" cy="9.500" r="3.600" fill="#f4f8ff" stroke="#222" stroke-width="1.200"/><path d="M9.500 7.500v4" stroke="#222" stroke-width="1.400"/><path d="M12.500 12.500l5.500 5.500" stroke="#c8a050" stroke-width="2.600"/><path d="M12.500 12.500l5.500 5.500" stroke="#443" stroke-width=".6"/></svg><span>System Infor...</span></div>
<div class="si" style="top:288px"><svg width="21" height="20" viewBox="0 0 21 20"><rect x="9.500" y="6.500" width="10" height="11" fill="#fff" stroke="#222"/><rect x="11" y="8.500" width="7" height="7" fill="#3c84d8"/><path d="M1 6c2-4 11-4 13 0c1 4-1 6-3 5l-2-2h-3l-2 2c-2 1-4-1-3-5z" fill="#e85c48" stroke="#7c1c10"/><circle cx="5" cy="6" r="1.200" fill="#fff"/><circle cx="10.500" cy="6" r="1.200" fill="#fff"/></svg><span>Image Viewer</span></div>
<div class="si" style="top:313px"><svg width="21" height="20" viewBox="0 0 21 20"><rect x="2.500" y="8.500" width="9" height="9" fill="#dceaf8" stroke="#222"/><rect x="5" y="11" width="5" height="5" fill="#3c84d8"/><rect x="8.500" y="5.500" width="10" height="7" fill="#f0f0f0" stroke="#222"/><path d="M12 8.500h3l-1.500 2z" fill="#222"/><path d="M10 2h1M13 1h1M16 2h1M13 3.500h1" stroke="#222"/></svg><span>Snapshot</span></div>
<div class="sg" style="top:339px"><svg class="pm" width="7" height="7" viewBox="0 0 7 7"><path d="M0 3.500h7M3.500 0v7" stroke="#6e6e6e" stroke-width="2"/></svg><span>Multimedia</span></div>
<div class="sg" style="top:358px"><svg class="pm" width="7" height="7" viewBox="0 0 7 7"><path d="M0 3.500h7M3.500 0v7" stroke="#6e6e6e" stroke-width="2"/></svg><span>Games</span></div>
<div class="sg" style="top:377px"><svg class="pm" width="7" height="7" viewBox="0 0 7 7"><path d="M0 3.500h7" stroke="#6e6e6e" stroke-width="2"/></svg><span>Configure</span></div>
<div class="si" style="top:395px"><svg width="21" height="20" viewBox="0 0 21 20"><rect x="5.500" y="2.500" width="12" height="11" fill="#f4f4f4" stroke="#222" stroke-width="1.300"/><rect x="5.500" y="2.500" width="12" height="2.500" fill="#444"/><path d="M18.500 1.500h1.500M18.500 4h1.500" stroke="#222"/><circle cx="4.500" cy="15.500" r="3.800" fill="#fff" stroke="#111" stroke-width="1.100"/><text x="4.500" y="18" font-size="6.500" font-weight="bold" text-anchor="middle" font-family="DejaVu Sans" fill="#111">?</text></svg><span>Appearance</span></div>
<div class="si" style="top:420px"><svg width="21" height="20" viewBox="0 0 21 20"><text x="6" y="13" font-size="15" font-style="italic" font-weight="bold" font-family="Liberation Serif" fill="#222">ff</text><path d="M6 15.500h13" stroke="#555" stroke-width="2"/><circle cx="4.500" cy="15.500" r="3.800" fill="#fff" stroke="#111" stroke-width="1.100"/><text x="4.500" y="18" font-size="6.500" font-weight="bold" text-anchor="middle" font-family="DejaVu Sans" fill="#111">?</text></svg><span>Fonts</span></div>
<div class="si" style="top:445px"><svg width="21" height="20" viewBox="0 0 21 20"><rect x="5.500" y="1.500" width="13" height="11" fill="#c8c4b8" stroke="#222" stroke-width="1.300"/><rect x="8" y="3.500" width="8" height="7" fill="#6c685c" stroke="#333"/><path d="M8 14.500h9" stroke="#222" stroke-width="1.600"/><circle cx="4.500" cy="15.500" r="3.800" fill="#fff" stroke="#111" stroke-width="1.100"/><text x="4.500" y="18" font-size="6.500" font-weight="bold" text-anchor="middle" font-family="DejaVu Sans" fill="#111">?</text></svg><span>Graphics</span></div>
<div class="si" style="top:470px"><svg width="21" height="20" viewBox="0 0 21 20"><circle cx="11.500" cy="9" r="7.600" fill="#1c78e0" stroke="#0c3478"/><path d="M8 3c3 0 5 2 4 4s-4 2-3 5c1 2 3 2 3 4c-3 0-7-3-7-7c0-3 1-5 3-6z" fill="#48b848"/><path d="M15 5c2 1 3 3 3 5l-3-1z" fill="#48b848"/><path d="M7 4c2-2 5-2 7-1" stroke="#bfe0ff" fill="none"/><circle cx="4.500" cy="15.500" r="3.800" fill="#fff" stroke="#111" stroke-width="1.100"/><text x="4.500" y="18" font-size="6.500" font-weight="bold" text-anchor="middle" font-family="DejaVu Sans" fill="#111">?</text></svg><span>Localization</span></div>
<div class="si" style="top:495px"><svg width="21" height="20" viewBox="0 0 21 20"><path d="M7.500 5.500c0-3 9-3 9 0v8c0 4-9 4-9 0z" fill="#f0f0f0" stroke="#222" stroke-width="1.200"/><path d="M7.500 9h9M12 5v4" stroke="#888" fill="none"/><path d="M12 3c0-2 3-2 5-2.500" stroke="#222" fill="none"/><circle cx="4.500" cy="15.500" r="3.800" fill="#fff" stroke="#111" stroke-width="1.100"/><text x="4.500" y="18" font-size="6.500" font-weight="bold" text-anchor="middle" font-family="DejaVu Sans" fill="#111">?</text></svg><span>Mouse</span></div>
<div class="si" style="top:520px"><svg width="21" height="20" viewBox="0 0 21 20"><path d="M4 2v16" stroke="#444" stroke-width="2"/><rect x="5.500" y="4.500" width="13" height="10" fill="#58a858" stroke="#1c4c1c"/><rect x="8" y="6.500" width="4" height="3" fill="#224"/><rect x="13.500" y="8" width="3" height="4" fill="#cfe8cf"/><path d="M7 16.500h8" stroke="#c8a838" stroke-width="2"/><path d="M1.500 5.500h3M1.500 9.500h3" stroke="#444" stroke-width="1.400"/></svg><span>Network</span></div>
<div class="si" style="top:545px"><svg width="21" height="20" viewBox="0 0 21 20"><path d="M6.500 1.500h8l2 2v7h-10z" fill="#fff" stroke="#333"/><path d="M8.500 4.500h5M8.500 7h5" stroke="#667"/><path d="M1.500 11.500l4-3h10l4 3v6h-18z" fill="#ece6da" stroke="#333"/><path d="M1.500 11.500h18" stroke="#8a8478"/><rect x="4.500" y="14" width="12" height="1.800" fill="#b4ac9c"/></svg><span>Print Manager</span></div>
<div class="si" style="top:570px"><svg width="21" height="20" viewBox="0 0 21 20"><path d="M9 1h3v16H9z" fill="#58b858" stroke="#1c5c1c"/><path d="M2 4.500l2-2h13v5H4l-2-2z" fill="#48b048" stroke="#1c5c1c"/><path d="M5 5h10" stroke="#cff0cf" stroke-dasharray="2 1"/><path d="M6 18.500c0-2 9-2 9 0z" fill="#58b858" stroke="#1c5c1c"/></svg><span>Remote Access</span></div>
<div class="si" style="top:595px"><svg width="21" height="20" viewBox="0 0 21 20"><path d="M6.500 2.500h3l1 2h3l1-2h3v13h-11z" fill="#e8e4dc" stroke="#222" stroke-width="1.200"/><rect x="8" y="7" width="8" height="4.500" fill="#3c90e0"/><path d="M6.500 13.500h11" stroke="#222"/><circle cx="4.500" cy="15.500" r="3.800" fill="#fff" stroke="#111" stroke-width="1.100"/><text x="4.500" y="18" font-size="6.500" font-weight="bold" text-anchor="middle" font-family="DejaVu Sans" fill="#111">?</text></svg><span>Screen Saver</span></div>
<div class="si" style="top:620px"><svg width="21" height="20" viewBox="0 0 21 20"><path d="M4 15l5-11h4l6 11z" fill="#a89c8c" stroke="#222" stroke-width="1.200"/><path d="M8 10l1-5 4-2 3 3v5l-4 2z" fill="#7cb4f0" stroke="#1c4478"/><circle cx="4.500" cy="15.500" r="3.800" fill="#fff" stroke="#111" stroke-width="1.100"/><text x="4.500" y="18" font-size="6.500" font-weight="bold" text-anchor="middle" font-family="DejaVu Sans" fill="#111">?</text></svg><span>Shelf</span></div>
<div class="si" style="top:645px"><svg width="21" height="20" viewBox="0 0 21 20"><circle cx="12" cy="9.500" r="7.600" fill="#1c78e0" stroke="#0c3478"/><path d="M8 4c3 0 5 2 4 4s-4 2-3 5c1 2 3 2 3 4c-3 0-7-3-7-7c0-3 1-5 3-6z" fill="#48b848"/><path d="M12 1v2" stroke="#222" stroke-width="1.600"/><path d="M7 5c2-2 5-2 7-1" stroke="#bfe0ff" fill="none"/><circle cx="4.500" cy="15.500" r="3.800" fill="#fff" stroke="#111" stroke-width="1.100"/><text x="4.500" y="18" font-size="6.500" font-weight="bold" text-anchor="middle" font-family="DejaVu Sans" fill="#111">?</text></svg><span>Time &amp; Date</span></div>
<div class="si" style="top:670px"><svg width="21" height="20" viewBox="0 0 21 20"><circle cx="6" cy="6" r="4" fill="#e8c8a0" stroke="#6c4c2c"/><circle cx="14" cy="7" r="4.600" fill="#f0d0a8" stroke="#6c4c2c"/><path d="M8 18c0-5 12-5 12 0z" fill="#8c8c9c" stroke="#333"/><path d="M10.500 4.500c2-2.500 6-2 7 0" stroke="#b8b8b8" stroke-width="1.600" fill="none"/><circle cx="12.500" cy="7" r=".8" fill="#222"/><circle cx="15.500" cy="7" r=".8" fill="#222"/><circle cx="4.500" cy="15.500" r="3.800" fill="#fff" stroke="#111" stroke-width="1.100"/><text x="4.500" y="18" font-size="6.500" font-weight="bold" text-anchor="middle" font-family="DejaVu Sans" fill="#111">?</text></svg><span>Users</span></div>
<div class="abs" style="left:0;top:694px;width:129px;height:2px;background:#8c8c8c"></div><div class="abs" style="left:0;top:696px;width:129px;height:3px;background:#d4d4d4;border-top:1px solid #fff"></div><div class="abs" style="left:0;top:699px;width:129px;height:1px;background:#8c8c8c"></div>
<div class="sg" style="top:701px"><svg class="pm" width="7" height="7" viewBox="0 0 7 7"><path d="M0 3.500h7" stroke="#6e6e6e" stroke-width="2"/></svg><span>System Monitor</span></div>
<div class="abs" id="smon" style="left:0;top:719px;width:129px;height:82px;background:#dcdcdc;border-top:1px solid #f8f8f8;border-bottom:1px solid #a4a4a4">
<svg class="abs" style="left:4px;top:4px" width="18" height="18" viewBox="0 0 18 18"><rect x="2.500" y="2.500" width="13" height="13" rx="1.500" fill="#3c3424" stroke="#1c140c"/><rect x="5" y="5" width="8" height="8" fill="#8c8474"/><path d="M4 1v2M7 1v2M10 1v2M13 1v2M4 15v2M7 15v2M10 15v2M13 15v2M1 4h2M1 7h2M1 10h2M1 13h2M15 4h2M15 7h2M15 10h2M15 13h2" stroke="#e8c860" stroke-width="1.400"/></svg>
<div class="bar" style="left:23px;top:5px;width:102px;height:15px"></div>
<svg class="abs" style="left:4px;top:25px" width="18" height="12" viewBox="0 0 18 12"><rect x=".500" y="1.500" width="17" height="8" fill="#4c7c4c" stroke="#223"/><rect x="2" y="3" width="3" height="3" fill="#223"/><rect x="6" y="3" width="3" height="3" fill="#223"/><rect x="10" y="3" width="3" height="3" fill="#223"/><rect x="14" y="3" width="2" height="3" fill="#223"/><path d="M1 10.500h16" stroke="#e8c860" stroke-width="1.600" stroke-dasharray="1 1"/></svg>
<div class="bar" style="left:23px;top:24px;width:102px;height:15px"><b style="position:absolute;left:0;top:0;width:26px;height:13px;background:#b6ccb0;border-right:1px solid #6c6c6c"></b></div>
<svg class="abs" style="left:4px;top:41px" width="20" height="20" viewBox="0 0 20 20"><rect x="1.500" y="1.500" width="9" height="13" fill="#f0ece0" stroke="#333"/><rect x="3" y="4" width="4" height="3" fill="#c8a030"/><path d="M6 9h7v7" stroke="#c89820" stroke-width="2" fill="none"/><path d="M15 11v6h2" stroke="#c89820" fill="none"/></svg>
<div class="bar" style="left:23px;top:43px;width:102px;height:6px"></div><div class="bar" style="left:23px;top:51px;width:102px;height:6px"></div>
<svg class="abs" style="left:4px;top:63px" width="19" height="12" viewBox="0 0 19 12"><rect x=".500" y="1.500" width="17" height="9" rx="1" fill="#e4e0c8" stroke="#444"/><path d="M2 4.500h14M2 7h14" stroke="#a4a088"/></svg>
<div class="bar" style="left:23px;top:62px;width:102px;height:6px"></div><div class="bar" style="left:23px;top:70px;width:102px;height:6px"></div>
</div>
<div class="sg" style="top:801px"><svg class="pm" width="7" height="7" viewBox="0 0 7 7"><path d="M0 3.500h7M3.500 0v7" stroke="#6e6e6e" stroke-width="2"/></svg><span>CD Player</span></div>
<div class="sg" style="top:820px"><svg class="pm" width="7" height="7" viewBox="0 0 7 7"><path d="M0 3.500h7M3.500 0v7" stroke="#6e6e6e" stroke-width="2"/></svg><span>World View</span></div>
</div>
<!--SHELF_END-->
<!--TASK_START-->
<!-- ================= Taskbar ================= -->
<div id="deskedge"></div>
<div id="taskbar">
 <div class="launch"><svg width="22" height="22" viewBox="0 0 22 22"><path d="M11 1.500l3 2.500 4-.5-.5 4 3 3.500-3 3.500.5 4-4-.5-3 2.500-3-2.500-4 .5.500-4-3-3.500 3-3.500-.5-4 4 .5z" fill="#f3e7a6" stroke="#b0943c"/><path d="M6.500 9.800h4.500V7l4.500 4-4.500 4v-2.800H6.500z" fill="#111"/></svg><span>Launch</span></div>
 <div class="tk act" style="left:90px"><svg width="20" height="18" viewBox="0 0 21 20"><rect x="5.500" y="1.500" width="11" height="10" fill="#d0d0d0" stroke="#222"/><rect x="7.500" y="3.500" width="7" height="6" fill="#8c8c8c" stroke="#444"/><path d="M3.500 12.500h14l2 5h-17z" fill="#e0e0e0" stroke="#222"/><path d="M5 14.500h11M4.500 16.500h12" stroke="#777"/></svg><span>ttyp0: sh</span></div>
 <div class="tk" style="left:215px"><svg width="20" height="18" viewBox="0 0 21 20"><path d="M2.500 2.500l7-1.500 2 1.500v14l-2 1.500h-7z" fill="#2c8ce0" stroke="#0c3c70"/><path d="M3.500 6h6M3.500 10.500h6M3.500 15h6" stroke="#bfe0ff" stroke-width="1.600"/><path d="M10.500 10.500l5-2 4 2v6l-5 2-4-2z" fill="#b08c5c" stroke="#3c2c14"/><path d="M10.500 10.500l4 2 5-2M14.500 12.500v6" stroke="#3c2c14" fill="none"/></svg><span>Photon File ...</span></div>
 <div class="tk" style="left:341px"><svg width="20" height="18" viewBox="0 0 21 20"><rect x="3.500" y="1.500" width="13" height="17" rx="1" fill="#d8dcf0" stroke="#101440" stroke-width="1.400"/><rect x="5" y="3" width="10" height="3.500" fill="#202870"/><g fill="#303890"><rect x="5" y="8" width="2" height="2"/><rect x="8" y="8" width="2" height="2"/><rect x="11" y="8" width="2" height="2"/><rect x="14" y="8" width="1.500" height="2"/><rect x="5" y="11" width="2" height="2"/><rect x="8" y="11" width="2" height="2"/><rect x="11" y="11" width="2" height="2"/><rect x="14" y="11" width="1.500" height="2"/><rect x="5" y="14" width="2" height="2"/><rect x="8" y="14" width="2" height="2"/><rect x="11" y="14" width="2" height="2"/><rect x="14" y="14" width="1.500" height="2"/></g></svg><span>Basic Calcu...</span></div>
 <div class="tk" style="left:467px"><svg width="20" height="18" viewBox="0 0 21 20"><rect x="1.500" y="1.500" width="9" height="8" fill="#eee" stroke="#222"/><rect x="4.500" y="4.500" width="9" height="8" fill="#dde" stroke="#222"/><circle cx="9.500" cy="9.500" r="3.600" fill="#f4f8ff" stroke="#222" stroke-width="1.200"/><path d="M9.500 7.500v4" stroke="#222" stroke-width="1.400"/><path d="M12.500 12.500l5.500 5.500" stroke="#c8a050" stroke-width="2.600"/><path d="M12.500 12.500l5.500 5.500" stroke="#443" stroke-width=".6"/></svg><span>System Pro...</span></div>
 <div class="rest"></div>
 <div class="clock">Fri-06 11:38AM</div>
</div>
<!--TASK_END-->
</div>
</body>
</html>
